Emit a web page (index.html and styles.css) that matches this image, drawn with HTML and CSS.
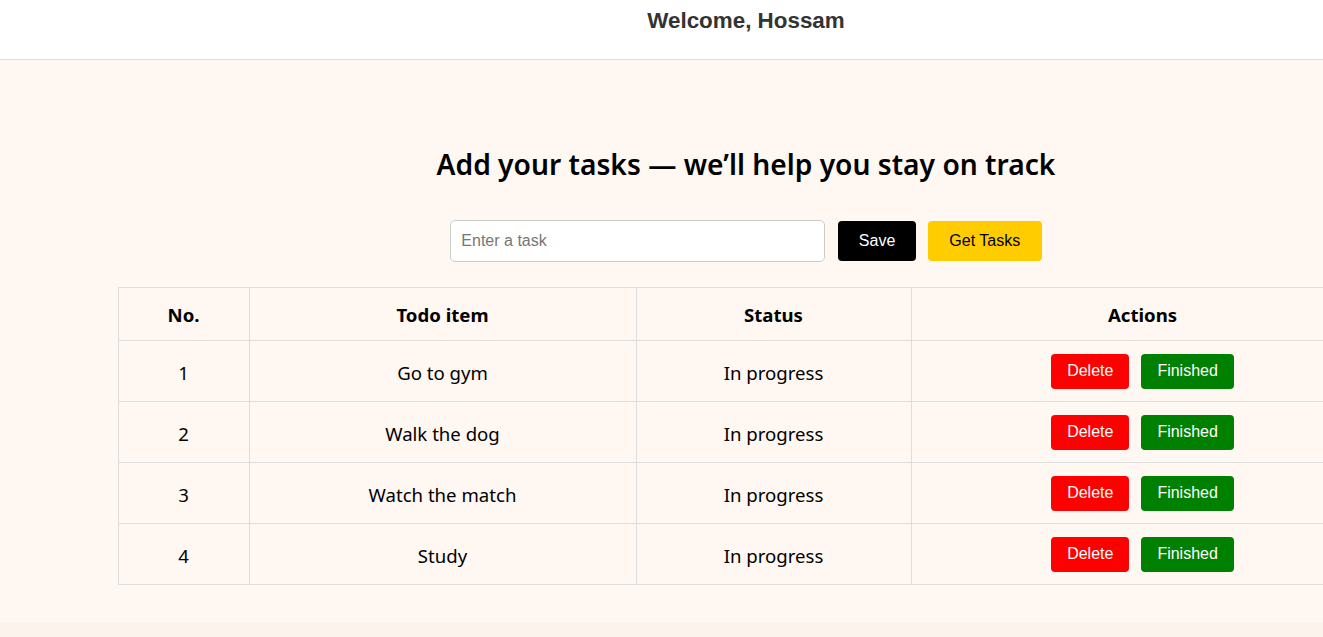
FILE: index.html
```html
<!DOCTYPE html>
<html lang="en">
<head>
<meta charset="utf-8">
<title>Todo</title>
<link rel="stylesheet" href="styles.css">
</head>
<body>
<div class="page">
  <header class="topbar">
    <h1 class="welcome">Welcome, Hossam</h1>
  </header>
  <main class="main">
    <h2 class="title">Add your tasks — we’ll help you stay on track</h2>
    <div class="controls">
      <input class="task-input" type="text" placeholder="Enter a task">
      <button class="btn btn-save">Save</button>
      <button class="btn btn-get">Get Tasks</button>
    </div>
    <table class="tasks">
      <thead>
        <tr><th class="c-no">No.</th><th class="c-item">Todo item</th><th class="c-status">Status</th><th class="c-actions">Actions</th></tr>
      </thead>
      <tbody>
        <tr><td>1</td><td>Go to gym</td><td>In progress</td><td class="c-act"><div class="actions"><button class="sbtn sbtn-del">Delete</button><button class="sbtn sbtn-fin">Finished</button></div></td></tr>
        <tr><td>2</td><td>Walk the dog</td><td>In progress</td><td class="c-act"><div class="actions"><button class="sbtn sbtn-del">Delete</button><button class="sbtn sbtn-fin">Finished</button></div></td></tr>
        <tr><td>3</td><td>Watch the match</td><td>In progress</td><td class="c-act"><div class="actions"><button class="sbtn sbtn-del">Delete</button><button class="sbtn sbtn-fin">Finished</button></div></td></tr>
        <tr><td>4</td><td>Study</td><td>In progress</td><td class="c-act"><div class="actions"><button class="sbtn sbtn-del">Delete</button><button class="sbtn sbtn-fin">Finished</button></div></td></tr>
      </tbody>
    </table>
  </main>
</div>
</body>
</html>
```
FILE: styles.css
```css
html, body {
  margin: 0;
  padding: 0;
  overflow: hidden;
  background: #fcf3ed;
}
.page {
  width: 1492px;
}
.topbar {
  box-sizing: border-box;
  height: 60px;
  background: #ffffff;
  border-bottom: 1px solid #dddddd;
  padding-top: 8px;
  text-align: center;
}
.welcome {
  margin: 0;
  font-family: "Liberation Sans", Arial, sans-serif;
  font-weight: bold;
  font-size: 22.4px;
  line-height: 26px;
  color: #333333;
}
.main {
  background: #fff7f1;
  height: 562px;
  padding-top: 82px;
  box-sizing: border-box;
  display: flex;
  flex-direction: column;
  align-items: center;
}
.title {
  margin: 0;
  font-family: "Noto Sans", sans-serif;
  font-weight: 600;
  font-size: 28.2px;
  line-height: 44px;
  color: #000;
}
.controls {
  margin-top: 34px;
  display: flex;
  align-items: center;
  gap: 12px;
}
.task-input {
  box-sizing: border-box;
  width: 375px;
  height: 42px;
  margin-right: 1px;
  border: 1px solid #cccccc;
  border-radius: 5px;
  padding: 0 10px;
  font-family: "Liberation Sans", Arial, sans-serif;
  font-size: 16px;
  background: #fff;
  color: #000;
}
.task-input::placeholder { color: #767676; }
.btn {
  border: none;
  border-radius: 4px;
  height: 40px;
  font-family: "Liberation Sans", Arial, sans-serif;
  font-size: 16px;
  cursor: pointer;
}
.btn-save { background: #000; color: #fff; padding: 0 20.5px; }
.btn-get { background: #ffcc00; color: #000; padding: 0 21.5px; }
.tasks {
  margin-top: 25px;
  width: 1257px;
  border-collapse: collapse;
  font-family: "Noto Sans", sans-serif;
  font-size: 18.6px;
  color: #000;
}
.tasks th, .tasks td {
  border: 1px solid #dddddd;
  text-align: center;
  padding: 0 12px;
}
.tasks th {
  height: 52px;
  font-weight: 700;
}
.tasks td { box-sizing: border-box; height: 61px; padding-top: 2px; }
.tasks td.c-act { padding-top: 0; }
.c-no { width: 106px; }
.c-item { width: 362px; }
.c-status { width: 250px; }
.actions {
  display: flex;
  justify-content: center;
  gap: 12px;
}
.sbtn {
  border: none;
  border-radius: 4px;
  height: 35px;
  padding: 0 16px;
  font-family: "Liberation Sans", Arial, sans-serif;
  font-size: 16px;
  color: #fff;
  cursor: pointer;
}
.sbtn-del { background: #ff0000; }
.sbtn-fin { background: #008000; }
```
